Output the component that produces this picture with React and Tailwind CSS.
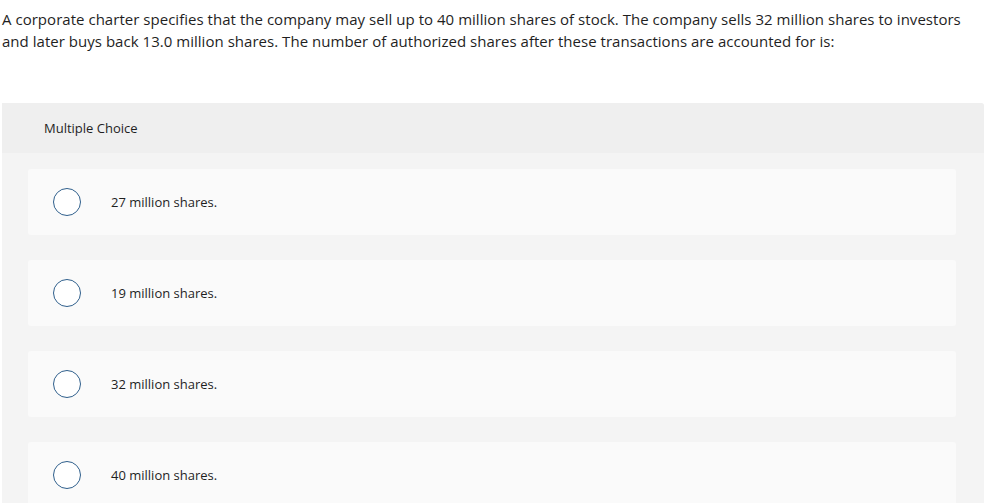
export default function App() {
  const options = ["27 million shares.", "19 million shares.", "32 million shares.", "40 million shares."];
  return (
    <div className="w-[999px] h-[503px] overflow-hidden bg-white text-[#1f1f1f]" style={{ fontFamily: "'Open Sans', Lato, sans-serif" }}>
      <p className="pl-[2px] w-[966px] pt-[8px] text-[15px] leading-[22px] tracking-[0.03px]">
        A corporate charter specifies that the company may sell up to 40 million shares of stock. The company sells 32 million shares to investors and later buys back 13.0 million shares. The number of authorized shares after these transactions are accounted for is:
      </p>
      <div className="ml-[2px] mt-[51px] w-[982px] rounded-tr-[3px] bg-[#f4f4f4]">
        <div className="h-[50px] flex items-center pl-[42px] pt-[2px] bg-[#efefef] rounded-tr-[3px] text-[13px]">Multiple Choice</div>
        <div className="flex flex-col gap-[25px] pt-[16px] pl-[26px] pr-[28px] pb-4">
          {options.map((o) => (
            <div key={o} className="h-[66px] rounded-[3px] bg-[#fafafa] flex items-center">
              <div className="ml-[25px] w-[28px] h-[28px] rounded-full border-[1.5px] border-[#2f5f8c] bg-white shrink-0" />
              <span className="ml-[30px] pt-[2px] text-[13px]">{o}</span>
            </div>
          ))}
        </div>
      </div>
    </div>
  );
}
